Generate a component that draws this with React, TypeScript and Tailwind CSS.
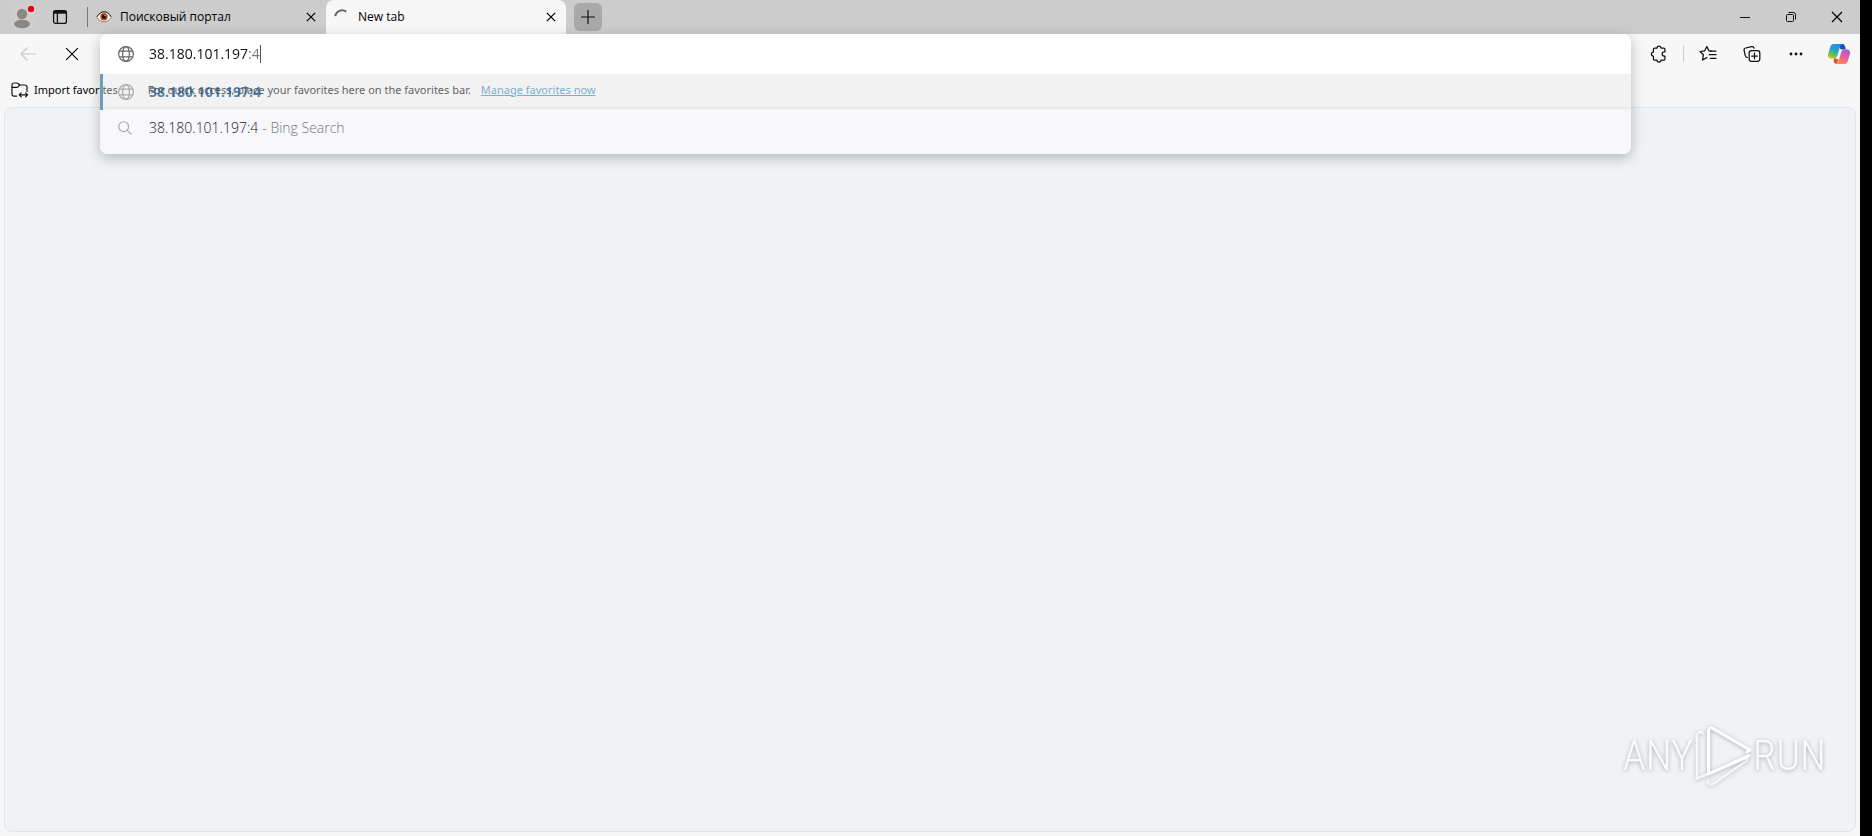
import type { ReactNode } from "react";

function Globe({ className }: { className: string }) {
  return (
    <svg className={className} width="18" height="18" viewBox="0 0 18 18" fill="none" stroke="currentColor" strokeWidth="1.2">
      <circle cx="9" cy="9" r="7.4" />
      <ellipse cx="9" cy="9" rx="3.4" ry="7.4" />
      <path d="M2.2 6.2h13.6M2.2 11.8h13.6" />
    </svg>
  );
}

function Cross({ size, weight }: { size: number; weight: number }) {
  return (
    <svg width={size} height={size} viewBox="0 0 12 12" fill="none" stroke="currentColor" strokeWidth={weight}>
      <path d="M1 1l10 10M11 1L1 11" />
    </svg>
  );
}

function ProfileIcon() {
  return (
    <svg width="28" height="28" viewBox="0 0 28 28">
      <circle cx="14" cy="14" r="13" fill="#d0cecc" />
      <circle cx="14" cy="11" r="5.2" fill="#8a8886" />
      <ellipse cx="14" cy="21" rx="8" ry="4.2" fill="#8a8886" />
      <circle cx="23" cy="6" r="4.6" fill="#d8d8d8" />
      <circle cx="23" cy="6" r="3.2" fill="#e3001b" />
    </svg>
  );
}

function TabActionsIcon() {
  return (
    <svg width="16" height="16" viewBox="0 0 16 16" fill="none" stroke="#111" strokeWidth="1.3">
      <rect x="1.6" y="1.6" width="12.8" height="12.8" rx="2" />
      <path d="M1.6 3.2h12.8" strokeWidth="3" />
      <path d="M5.4 4v10.4" />
    </svg>
  );
}

function EyeIcon() {
  return (
    <svg width="16" height="16" viewBox="0 0 16 16">
      <path d="M.8 8.3C3 4.5 5.6 3 8.2 3c2.8 0 5.2 1.8 7 5.3-2 3-4.3 4.5-7 4.5S3.2 11.4.8 8.3z" fill="#fff8ee" stroke="#7c6652" strokeWidth=".8" />
      <path d="M1 7.600C3.200 4 5.600 2.700 8.200 2.700s5 1.400 6.800 4.900" fill="none" stroke="#3d2a1c" strokeWidth="1" />
      <circle cx="8" cy="7.700" r="3.700" fill="#b4532a" />
      <circle cx="8" cy="7.700" r="2.200" fill="#32100a" />
      <circle cx="9" cy="6.600" r=".7" fill="#fff" />
    </svg>
  );
}

function Spinner() {
  return (
    <svg width="16" height="16" viewBox="0 0 16 16" fill="none" stroke="#666" strokeWidth="2">
      <path d="M1.2 7.200A7 7 0 0 1 12.200 2.600" />
    </svg>
  );
}

function ImportIcon() {
  return (
    <svg width="18" height="18" viewBox="0 0 18 18" fill="none" stroke="#111" strokeWidth="1.2" strokeLinejoin="round" strokeLinecap="round">
      <path d="M5.600 15.200H3a2 2 0 0 1-2-2V4a2 2 0 0 1 2-2h2.800c.5 0 .9.200 1.200.5L8.600 4H14a2 2 0 0 1 2 2v4.400" />
      <path d="M1 6.400h4.900c.5 0 .9-.2 1.200-.5L8.600 4" />
      <path d="M8.200 13.800h8.400M10.200 11.800l-2 2 2 2M14.600 11.800l2 2-2 2" />
    </svg>
  );
}

function PuzzleIcon() {
  return (
    <svg width="18" height="18" viewBox="0 0 18 18" fill="none" stroke="#111" strokeWidth="1.250" strokeLinejoin="round">
      <path d="M4.600 3.200H7a2 2 0 0 1 4-.1h2.700a1.200 1.200 0 0 1 1.200 1.200v2.600h-.6a2.100 2.100 0 0 0 0 4.200h.6v2.800a1.200 1.200 0 0 1-1.200 1.200H11a2 2 0 0 1-4 0H4.600a1.200 1.200 0 0 1-1.200-1.200V11a2 2 0 0 1 0-4V4.400a1.200 1.200 0 0 1 1.200-1.200z" />
    </svg>
  );
}

function FavoritesIcon() {
  return (
    <svg width="18" height="18" viewBox="0 0 18 18" fill="none" stroke="#111" strokeWidth="1.250" strokeLinejoin="round" strokeLinecap="round">
      <path d="M12.100 6.100l-2.200-.3-2-4.200-2.200 4.200-4.700.7 3.400 3.300-.9 5.200 4.400-2.400" />
      <path d="M11.400 6.100h5.600M10.200 9.700H17M11.400 13.300H17" />
    </svg>
  );
}

function CollectionsIcon() {
  return (
    <svg width="18" height="18" viewBox="0 0 18 18" fill="none" stroke="#111" strokeWidth="1.250" strokeLinejoin="round" strokeLinecap="round">
      <rect x="6.200" y="5.700" width="10.600" height="10.600" rx="2.200" />
      <path d="M11.500 8.200v5.600M8.700 11h5.600" />
      <path d="M4.300 12.600A3.400 3.400 0 0 1 2.200 10.300L1.100 5.400A2 2 0 0 1 2.600 3L8.600 1.600A2 2 0 0 1 11 3.100" />
    </svg>
  );
}

function CopilotIcon() {
  return (
    <svg width="24" height="22" viewBox="0 0 24 22">
      <defs>
        <linearGradient id="coolArm" x1="0.600" y1="0" x2="0.200" y2="1">
          <stop offset="0" stopColor="#1c8fe8" />
          <stop offset=".45" stopColor="#2aa9c0" />
          <stop offset=".75" stopColor="#6cc24a" />
          <stop offset="1" stopColor="#f2c417" />
        </linearGradient>
        <linearGradient id="warmArm" x1="0.700" y1="0" x2="0.300" y2="1">
          <stop offset="0" stopColor="#a259e6" />
          <stop offset=".5" stopColor="#ec5c9c" />
          <stop offset="1" stopColor="#fb8a4c" />
        </linearGradient>
      </defs>
      <path d="M15.800 1c1.200.2 1.800 1 2.200 2.300l.9 3.100h-5L12 3.500C12.400 1.700 13.600.9 15.800 1z" fill="#1b4fc4" />
      <path d="M7 15l4.500 1.500L10 20.800c-1.700.2-2.700-.5-3.200-2.300z" fill="#e8502c" />
      <path d="M6.600 1h9.200c-1.500.2-2.300 1.100-2.800 2.700l-2.700 9c-.7 2.200-1.700 3-3.900 3H4.300C1.500 15.700.4 13.600 1.200 10.700l2-6.700C3.800 2 4.900 1 6.600 1z" fill="url(#coolArm)" />
      <path d="M17.400 21H8.800c1.400-.2 2.200-1 2.700-2.700l2.600-8.900c.7-2.200 1.700-3 3.900-3h1.700c2.800 0 3.900 2.100 3.100 5l-2 6.600c-.6 2-1.700 3-3.400 3z" fill="url(#warmArm)" />
    </svg>
  );
}

function Watermark() {
  return (
    <div className="flex items-center font-['Roboto_Condensed','Liberation_Sans_Narrow',sans-serif] text-[42px] leading-[64px] font-light text-[#fafbfc] [filter:drop-shadow(0_1px_2px_rgba(90,100,110,0.5))]">
      <span>ANY</span>
      <svg width="60" height="64" viewBox="0 0 60 64" fill="none" stroke="#fff" strokeLinejoin="round" strokeLinecap="round">
        <path d="M10 9C6.500 7 4 8.500 4 12v42.500L54 33.500" opacity=".75" strokeWidth="2.500" />
        <path d="M54 28L57 26 20 4.500C17.500 3 15.500 4 15.500 7v43L56 31.500" strokeWidth="3" />
        <path d="M54 31.500v5L20 60c-3 1.500-4.500 0-5-2" opacity=".7" strokeWidth="2.500" />
      </svg>
      <span>RUN</span>
    </div>
  );
}

function ToolButton({ label, children }: { label: string; children: ReactNode }) {
  return (
    <button type="button" aria-label={label} className="flex h-8 w-11 items-center justify-center">
      {children}
    </button>
  );
}

function WindowButton({ label, children }: { label: string; children: ReactNode }) {
  return (
    <button type="button" aria-label={label} className="flex h-full w-[46px] items-center justify-center">
      {children}
    </button>
  );
}

function TitleBar() {
  return (
    <header className="flex h-[34px] shrink-0 items-center bg-[#cccccc]">
      <button type="button" aria-label="Profile" className="ml-2">
        <ProfileIcon />
      </button>
      <button type="button" aria-label="Tab actions" className="ml-4">
        <TabActionsIcon />
      </button>
      <div className="ml-[19px] h-5 w-px bg-[#777]" />
      <div className="flex h-full w-[238px] items-center pl-2 pr-1.5">
        <EyeIcon />
        <span className="ml-2 flex-1 text-xs">Поисковый портал</span>
        <button type="button" aria-label="Close Поисковый портал" className="p-1">
          <Cross size={10} weight={1.5} />
        </button>
      </div>
      <div className="flex h-full w-[240px] items-center rounded-t-lg bg-[#f7f7f7] pl-2 pr-1.5">
        <Spinner />
        <span className="ml-2 flex-1 text-xs">New tab</span>
        <button type="button" aria-label="Close New tab" className="p-1">
          <Cross size={10} weight={1.5} />
        </button>
      </div>
      <button type="button" aria-label="New tab" className="ml-2 flex size-7 items-center justify-center rounded-md bg-[#a9a9a9]">
        <svg width="14" height="14" viewBox="0 0 14 14" stroke="#111" strokeWidth="1.200">
          <path d="M7 0v14M0 7h14" />
        </svg>
      </button>
      <div className="ml-auto flex h-full">
        <WindowButton label="Minimize">
          <svg width="10" height="10" viewBox="0 0 10 10" stroke="#111">
            <path d="M0 5.500h10" />
          </svg>
        </WindowButton>
        <WindowButton label="Restore">
          <svg width="10" height="10" viewBox="0 0 10 10" fill="none" stroke="#111">
            <rect x=".5" y="2.500" width="7" height="7" rx="1" />
            <path d="M2.500.5h5a2 2 0 0 1 2 2v5" />
          </svg>
        </WindowButton>
        <WindowButton label="Close window">
          <Cross size={12} weight={1.2} />
        </WindowButton>
      </div>
    </header>
  );
}

function Omnibox() {
  return (
    <div className="absolute inset-x-0 top-0 z-10 overflow-hidden rounded-lg text-sm shadow-[0_4px_14px_rgba(0,0,0,0.24)]">
      <div className="flex h-10 items-center bg-white pl-[17px]">
        <Globe className="text-[#666]" />
        <input
          aria-label="Address and search bar"
          defaultValue="38.180.101.197:4"
          className="ml-[14px] bg-[linear-gradient(90deg,#111_89%,#777_89%)] bg-clip-text text-transparent outline-none [field-sizing:content]"
        />
        <span className="h-[18px] w-px bg-[#555]" />
      </div>
      <button type="button" className="flex h-9 w-full items-center border-l-[3px] border-[#6d9bbd] bg-[#ebebeb]/40 pl-[14px] text-left">
        <Globe className="text-[#aaa]" />
        <span className="ml-[14px] font-bold text-[#18507f]/70">38.180.101.197:4</span>
      </button>
      <div className="h-11 bg-[#f7f7fc]">
        <button type="button" className="flex h-9 w-full items-center pl-[17px] text-left font-light">
          <svg width="16" height="16" viewBox="0 0 18 18" fill="none" stroke="#aaa" strokeWidth="1.300">
            <circle cx="7.500" cy="7.500" r="5.500" />
            <path d="M11.500 11.500l5 5" />
          </svg>
          <span className="ml-4 text-[#222]">38.180.101.197:4</span>
          <span className="ml-1 text-[#777]">- Bing Search</span>
        </button>
      </div>
    </div>
  );
}

export default function App() {
  return (
    <div className="flex min-h-screen bg-black pr-3 font-['Open_Sans','Noto_Sans',sans-serif] text-black">
      <div className="flex flex-1 flex-col bg-[#f7f7f7]">
        <TitleBar />
        <nav className="flex h-10 shrink-0" aria-label="Toolbar">
          <div className="flex w-[100px] items-center pl-[6px]">
            <ToolButton label="Back">
              <svg width="16" height="16" viewBox="0 0 16 16" fill="none" stroke="#c8c8c8" strokeWidth="1.200">
                <path d="M16 8H1M7.500 1.500L1 8l6.500 6.500" />
              </svg>
            </ToolButton>
            <ToolButton label="Stop loading">
              <Cross size={14} weight={1} />
            </ToolButton>
          </div>
          <div className="relative flex-1">
            <Omnibox />
          </div>
          <div className="flex items-center pl-[6px]">
            <ToolButton label="Extensions">
              <PuzzleIcon />
            </ToolButton>
            <div className="mx-[2px] h-4 w-px bg-[#ccc]" />
            <ToolButton label="Favorites">
              <FavoritesIcon />
            </ToolButton>
            <ToolButton label="Collections">
              <CollectionsIcon />
            </ToolButton>
            <ToolButton label="Settings and more">
              <svg width="14" height="4" viewBox="0 0 14 4" fill="#111">
                <circle cx="2" cy="2" r="1.400" />
                <circle cx="7" cy="2" r="1.400" />
                <circle cx="12" cy="2" r="1.400" />
              </svg>
            </ToolButton>
            <button type="button" aria-label="Copilot" className="flex h-8 w-[42px] items-center justify-center">
              <CopilotIcon />
            </button>
          </div>
        </nav>
        <div className="flex h-[33px] shrink-0 items-center whitespace-nowrap pb-px pl-[11px] font-['Noto_Sans',sans-serif] text-[11px]">
          <button type="button" className="flex items-center gap-[5px]">
            <ImportIcon />
            Import favorites
          </button>
          <p className="ml-[30px]">For quick access, place your favorites here on the favorites bar.</p>
          <a href="#favorites" className="ml-[10px] text-[#2b88c8] underline">
            Manage favorites now
          </a>
        </div>
        <main className="mx-1 mb-1 flex flex-1 flex-col items-end justify-end rounded-lg border border-[#e2e4e6] bg-[#eff3f6] pb-[43px] pr-[29px]">
          <Watermark />
        </main>
      </div>
    </div>
  );
}
